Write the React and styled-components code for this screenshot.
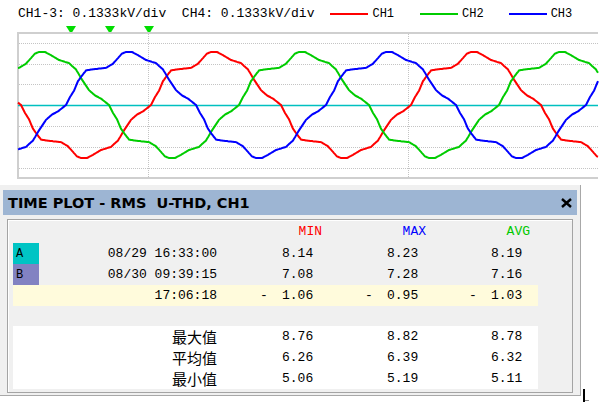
import styled, { createGlobalStyle } from "styled-components";

const GlobalStyle = createGlobalStyle`
  html, body {
    margin: 0;
    padding: 0;
    background: #fff;
  }
  body {
    font-family: "Liberation Mono", monospace;
    overflow: hidden;
  }
`

const Page = styled.div`
  width: 604px;
  height: 403px;
  overflow: hidden;
  background: #fff;
`

const ScaleHeader = styled.div`
  display: flex;
  align-items: center;
  height: 20px;
  padding: 4px 0 0 18px;
  font-family: "Liberation Mono", monospace;
  font-size: 13px;
  line-height: 20px;
  color: #000;
  white-space: pre;
`

const LegendItem = styled.div`
  display: flex;
  align-items: center;
  margin-left: ${(p) => p.$gap}px;
`

const LegendLine = styled.span`
  display: block;
  width: 38px;
  height: 2px;
  background: ${(p) => p.$color};
`

const LegendLabel = styled.span`
  margin-left: 4px;
  font-size: 12px;
`

const Lower = styled.div`
  display: flex;
  align-items: flex-start;
  margin-top: 1px;
`

const Window = styled.div`
  box-sizing: border-box;
  width: 581px;
  height: 211px;
  padding: 5px 3px 0 3px;
  background: #f0f0f0;
  border-right: 1px solid #a8a8a8;
  border-bottom: 1px solid #a8a8a8;
  display: flex;
  flex-direction: column;
`

const TitleBar = styled.div`
  display: flex;
  align-items: center;
  justify-content: space-between;
  height: 25px;
  padding: 0 5px 0 5px;
  background: #9db5d3;
`

const Title = styled.span`
  font-family: "DejaVu Sans", sans-serif;
  font-weight: bold;
  font-size: 14.5px;
  color: #000;
  white-space: pre;
`

const Panel = styled.div`
  box-sizing: border-box;
  margin: 4px 4px 0 4px;
  height: 174px;
  padding: 0 0 0 5px;
  border: 1px solid #a4a4a4;
  box-shadow: inset 1px 1px 0 #fff;
  font-family: "Liberation Mono", monospace;
  font-size: 13px;
  color: #000;
`

const Row = styled.div`
  display: grid;
  grid-template-columns: 26px 178px 105px 104px 104px 1fr;
  align-items: center;
  width: 525px;
  height: ${(p) => p.$h || 21}px;
  background: ${(p) => p.$bg || "transparent"};
`

const Badge = styled.div`
  height: 100%;
  display: flex;
  align-items: center;
  padding-left: 3px;
  font-size: 12px;
  background: ${(p) => p.$color};
`

const TimeCell = styled.div`
  text-align: right;
  white-space: pre;
`

const Label = styled.div`
  text-align: right;
  font-family: "Noto Sans CJK SC", "Noto Sans CJK TC", sans-serif;
  font-size: 15px;
  line-height: 21px;
`

const HeadCell = styled.div`
  text-align: right;
  color: ${(p) => p.$color};
`

const ValueCell = styled.div`
  display: flex;
  padding-left: 43px;
  white-space: pre;
`

const Minus = styled.span`
  width: 22px;
`

const Spacer = styled.div`
  height: 20px;
`

const StatsBox = styled.div`
  width: 525px;
  background: #fff;
`

const Cursor = styled.div`
  position: relative;
  width: 2px;
  height: 13px;
  margin: 204px 0 0 2px;
  background: #000;
  &::after {
    content: "";
    position: absolute;
    left: 2px;
    bottom: 1px;
    width: 4px;
    height: 1px;
    background: #888;
  }
`

// one half-cycle of the distorted wave, offset px -> value
const KEYS = [
  [0, 0], [4, 0.15], [8, 0.27], [12, 0.45], [17, 0.58], [20, 0.65], [25, 0.67],
  [35, 0.69], [40, 0.7], [47, 0.78], [56, 0.97], [60, 1], [66, 1], [72, 0.94],
  [80, 0.85], [90, 0.79], [97, 0.67], [103, 0.48], [110, 0.28], [116, 0.18],
  [122, 0.12], [130, 0],
]
const PERIOD = 260

const half = (o) => {
  for (let i = 1; i < KEYS.length; i++) {
    if (o <= KEYS[i][0]) {
      const [x0, y0] = KEYS[i - 1]
      const [x1, y1] = KEYS[i]
      return y0 + ((o - x0) / (x1 - x0)) * (y1 - y0)
    }
  }
  return 0
}

const wave = (xUp) => {
  const pts = []
  for (let x = 18; x <= 598; x++) {
    const o = (((x - xUp) % PERIOD) + PERIOD) % PERIOD
    const v = o < 130 ? half(o) : -half(o - 130)
    pts.push(`${x},${(81 - 53 * v).toFixed(1)}`)
  }
  return pts.join(" ")
}

const GRID_Y = [19, 40, 60, 102, 123, 144]
const GRID_X = [148, 408]
const MARKERS = [71, 110, 149]

const Scope = () => (
  <svg width="604" height="160" style={{ display: "block" }}>
    {MARKERS.map((x) => (
      <polygon key={x} points={`${x - 5},2 ${x + 5},2 ${x},10`} fill="#00dd00" />
    ))}
    {GRID_Y.map((y) => (
      <line key={y} x1="19" x2="598" y1={y + 0.5} y2={y + 0.5} stroke="#c4c4c4" strokeDasharray="1 1" />
    ))}
    {GRID_X.map((x) => (
      <line key={x} x1={x + 0.5} x2={x + 0.5} y1="10" y2="153" stroke="#c4c4c4" strokeDasharray="1 1" />
    ))}
    <line x1="17" x2="598" y1="9" y2="9" stroke="#cfcfcf" strokeWidth="2" />
    <line x1="17" x2="598" y1="154" y2="154" stroke="#cfcfcf" strokeWidth="2" />
    <line x1="18" x2="18" y1="8" y2="155" stroke="#cfcfcf" strokeWidth="2" />
    <line x1="18" x2="598" y1="81.5" y2="81.5" stroke="#00c0c0" strokeWidth="1.5" />
    <polyline points={wave(151)} fill="none" stroke="#ff0000" strokeWidth="2" />
    <polyline points={wave(239)} fill="none" stroke="#00cc00" strokeWidth="2" />
    <polyline points={wave(66)} fill="none" stroke="#0000ff" strokeWidth="2" />
  </svg>
)

const CloseIcon = () => (
  <svg width="11" height="10" viewBox="0 0 11 10">
    <path d="M1 1 L10 9 M10 1 L1 9" stroke="#000" strokeWidth="2.4" />
  </svg>
)

const cursors = [
  { name: "A", color: "#00c4c4", time: "08/29 16:33:00", vals: ["8.14", "8.23", "8.19"] },
  { name: "B", color: "#8282c2", time: "08/30 09:39:15", vals: ["7.08", "7.28", "7.16"] },
]

const stats = [
  { label: "最大值", vals: ["8.76", "8.82", "8.78"] },
  { label: "平均值", vals: ["6.26", "6.39", "6.32"] },
  { label: "最小值", vals: ["5.06", "5.19", "5.11"] },
]

const Values = ({ vals, minus }) =>
  vals.map((v, i) => (
    <ValueCell key={i}>
      <Minus>{minus ? "-" : ""}</Minus>
      {v}
    </ValueCell>
  ))

export default function App() {
  return (
    <Page>
      <GlobalStyle />
      <ScaleHeader>
        <span>CH1-3: 0.1333kV/div  CH4: 0.1333kV/div</span>
        <LegendItem $gap={16}>
          <LegendLine $color="#ff0000" />
          <LegendLabel>CH1</LegendLabel>
        </LegendItem>
        <LegendItem $gap={26}>
          <LegendLine $color="#00cc00" />
          <LegendLabel>CH2</LegendLabel>
        </LegendItem>
        <LegendItem $gap={25}>
          <LegendLine $color="#0000ff" />
          <LegendLabel>CH3</LegendLabel>
        </LegendItem>
      </ScaleHeader>

      <Scope />

      <Lower>
        <Window>
          <TitleBar>
            <Title>TIME PLOT - RMS  U-THD, CH1</Title>
            <CloseIcon />
          </TitleBar>
          <Panel>
            <Row $h={23}>
              <span />
              <span />
              <HeadCell $color="#ff0000">MIN</HeadCell>
              <HeadCell $color="#0000ff">MAX</HeadCell>
              <HeadCell $color="#00c800">AVG</HeadCell>
            </Row>
            {cursors.map((c) => (
              <Row key={c.name}>
                <Badge $color={c.color}>{c.name}</Badge>
                <TimeCell>{c.time}</TimeCell>
                <Values vals={c.vals} />
              </Row>
            ))}
            <Row $bg="#fffbdc">
              <span />
              <TimeCell>17:06:18</TimeCell>
              <Values vals={["1.06", "0.95", "1.03"]} minus />
            </Row>
            <Spacer />
            <StatsBox>
              {stats.map((s) => (
                <Row key={s.label}>
                  <span />
                  <Label>{s.label}</Label>
                  <Values vals={s.vals} />
                </Row>
              ))}
            </StatsBox>
          </Panel>
        </Window>
        <Cursor />
      </Lower>
    </Page>
  )
}
